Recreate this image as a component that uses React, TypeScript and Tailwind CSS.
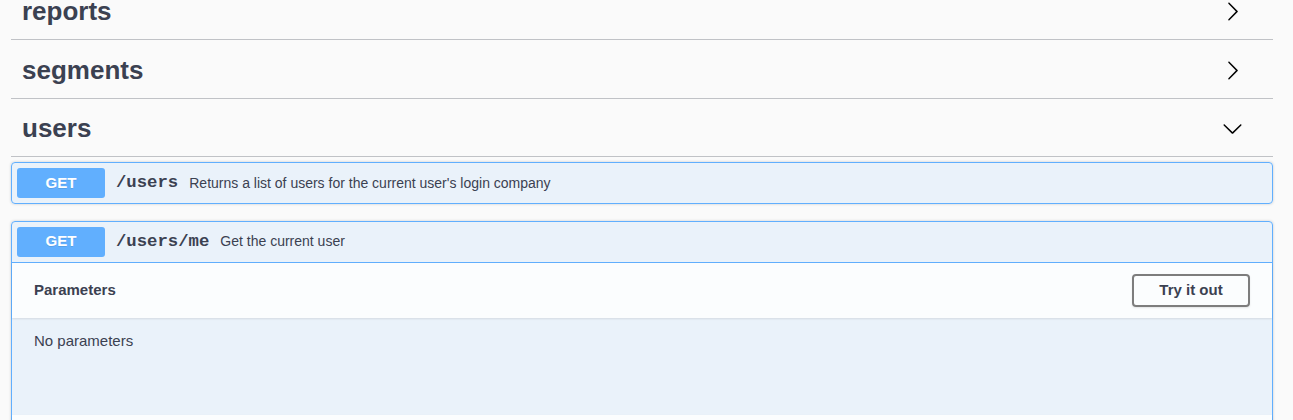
const tags = [
  { name: "reports", open: false },
  { name: "segments", open: false },
  { name: "users", open: true },
];

function ArrowRight() {
  return (
    <svg viewBox="0 0 20 20" className="w-[21px] h-[21px] shrink-0" fill="#000">
      <path d="M13.25 10L6.109 2.58c-.268-.27-.268-.707 0-.979.268-.27.701-.27.969 0l7.83 7.908c.268.271.268.709 0 .979l-7.83 7.908c-.268.271-.701.27-.969 0-.268-.269-.268-.707 0-.979L13.25 10z" />
    </svg>
  );
}

function ArrowDown() {
  return (
    <svg viewBox="0 0 20 20" className="w-[21px] h-[21px] shrink-0" fill="#000">
      <path d="M17.418 6.109c.272-.268.709-.268.979 0s.271.701 0 .969l-7.908 7.83c-.27.268-.707.268-.979 0l-7.908-7.83c-.27-.268-.27-.701 0-.969.271-.268.709-.268.979 0L10 13.25l7.418-7.141z" />
    </svg>
  );
}

function Summary({ path, desc, open }: { path: string; desc: string; open?: boolean }) {
  return (
    <div
      className={`flex items-center p-[5px] ${open ? "border-b border-[#61affe]" : ""}`}
    >
      <span className="w-[88px] h-[30px] flex items-center justify-center rounded-[3px] bg-[#61affe] text-white font-bold text-[15px] text-shadow-[0_1px_0_rgba(0,0,0,0.1)]">
        GET
      </span>
      <span className="pl-[11px] pr-[11px] font-['Liberation_Mono',monospace] font-bold text-[17.3px] text-[#3b4151]">
        {path}
      </span>
      <span className="text-[14px] text-[#3b4151]">{desc}</span>
    </div>
  );
}

export default function App() {
  return (
    <div className="min-h-screen bg-[#fafafa] pl-[11px] pr-[20px] overflow-hidden font-['Liberation_Sans',Arial,sans-serif]">
      <div className="-mt-[13px]">
        {tags.map((t, i) => (
          <div
            key={t.name}
            className={`h-[53px] flex items-center justify-between pl-[11px] pr-[30px] pb-[3px] border-b border-[rgba(59,65,81,0.3)] ${
              i === tags.length - 1 ? "mb-[5px]" : "mb-[5.5px]"
            }`}
          >
            <span className="text-[26px] font-bold text-[#3b4151]">{t.name}</span>
            {t.open ? <ArrowDown /> : <ArrowRight />}
          </div>
        ))}
      </div>

      <div className="mb-[16.5px] border border-[#61affe] rounded-[4px] bg-[rgba(97,175,254,0.1)] shadow-[0_0_3px_rgba(0,0,0,0.19)]">
        <Summary path="/users" desc="Returns a list of users for the current user's login company" />
      </div>

      <div className="border border-[#61affe] rounded-[4px] bg-[rgba(97,175,254,0.1)] shadow-[0_0_3px_rgba(0,0,0,0.19)]">
        <Summary path="/users/me" desc="Get the current user" open />
        <div className="h-[55px] flex items-center justify-between px-[22px] bg-[rgba(255,255,255,0.8)] shadow-[0_1px_2px_rgba(0,0,0,0.1)]">
          <span className="font-bold text-[15px] text-[#3b4151]">Parameters</span>
          <button className="w-[118px] h-[33px] rounded-[4px] border-2 border-[#7d7d7d] font-bold text-[15px] text-[#3b4151] shadow-[0_1px_2px_rgba(0,0,0,0.1)]">
            Try it out
          </button>
        </div>
        <div className="h-[97px] px-[22px] pt-[12px] text-[15px] text-[#3b4151]">No parameters</div>
        <div className="h-[55px] bg-[rgba(255,255,255,0.8)] shadow-[0_1px_2px_rgba(0,0,0,0.1)]" />
      </div>
    </div>
  );
}
